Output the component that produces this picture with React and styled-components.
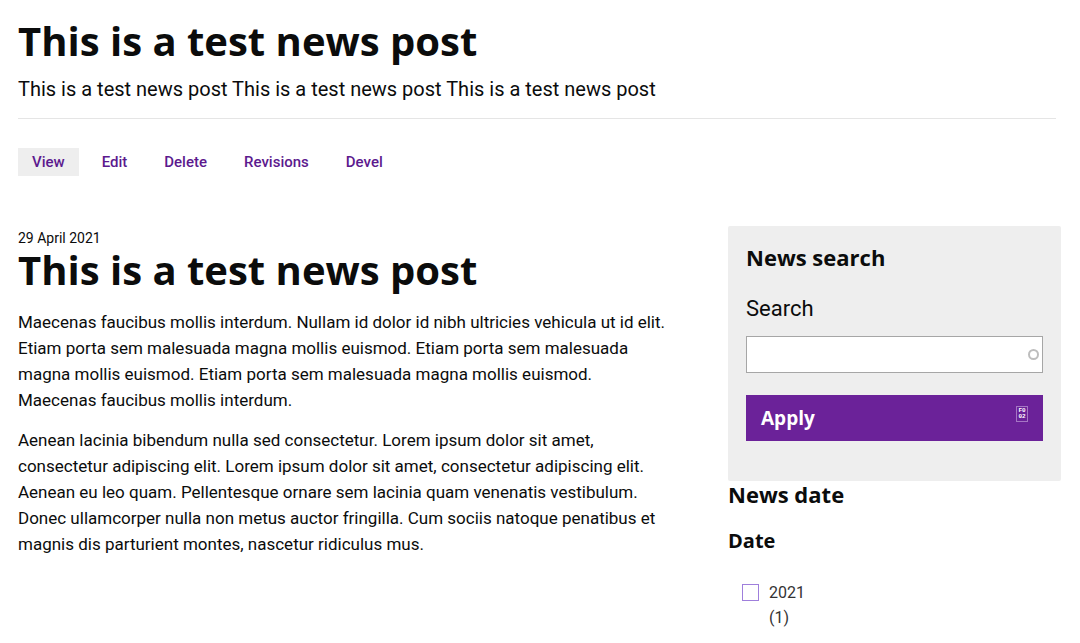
import React from "react";
import styled, { createGlobalStyle } from "styled-components";

const Global = createGlobalStyle`
  *, *::before, *::after { box-sizing: border-box; }
  body { margin: 0; background: #fff; color: #0b0c0c; font-family: Roboto, "Liberation Sans", sans-serif; }
`;
const display = `"Open Sans", "Noto Sans", sans-serif`;

const Page = styled.div`padding: 21px 19px 0 18px;`;
const Header = styled.header`
  margin-right: 5px;
  padding-bottom: 16px;
  border-bottom: 1px solid #e5e5e5;
`;
const Title = styled.h1`
  margin: 0 0 ${(p) => (p.$article ? 19 : 15)}px;
  font: 700 40px/40px ${display};
`;
const Summary = styled.p`
  margin: 0;
  font-size: 20px;
  line-height: 26px;
`;
const Tabs = styled.nav`
  display: flex;
  flex-wrap: wrap;
  gap: 9px;
  margin-top: 29px;
`;
const Tab = styled.a`
  padding: 0 14px;
  font-size: 15px;
  font-weight: 500;
  line-height: 28px;
  color: #5c1a8e;
  text-decoration: none;
  background: ${(p) => (p.$active ? "#eeeeee" : "transparent")};
`;
const Columns = styled.div`
  display: grid;
  grid-template-columns: minmax(0, 2fr) minmax(0, 1fr);
  gap: 44px;
  margin-top: 50px;
`;
const Article = styled.article`
  padding-right: 12px;
  font-size: 17px;
  line-height: 26px;
`;
const Posted = styled.time`
  display: block;
  font-size: 14px;
  line-height: 24px;
`;
const Paragraph = styled.p`margin: 0 0 14px;`;
const Side = styled.aside`
  min-width: 0;
`;
const SearchForm = styled.form`
  padding: 18px 18px 40px;
  border-radius: 2px;
  background: #eeeeee;
`;
const SideHeading = styled.h2`
  margin: 0;
  font: 700 22px/26px ${display};
`;
const GroupHeading = styled(SideHeading)`
  margin-top: 21px;
  font-size: 20px;
`;
const Label = styled.label`
  display: block;
  margin-top: 25px;
  font-size: 22px;
  line-height: 28px;
`;
const Field = styled.div`
  display: flex;
  align-items: center;
  margin-top: 13px;
  padding-right: 3px;
  border: 1px solid #a6a6a6;
  background: #fff;
`;
const Input = styled.input`
  flex: 1;
  min-width: 0;
  height: 35px;
  padding: 0 8px;
  border: 0;
  background: transparent;
  font: 18px Roboto, sans-serif;
`;
const Throbber = styled.span`
  width: 11px;
  height: 11px;
  border: 2px solid #bdbdbd;
  border-radius: 50%;
`;
const Apply = styled.button`
  display: flex;
  justify-content: space-between;
  align-items: center;
  width: 100%;
  height: 46px;
  margin-top: 22px;
  padding: 0 15px;
  border: 0;
  background: #6b2299;
  color: #fff;
  font: 700 19px/28px ${display};
`;
const CodeBox = styled.span`
  width: 12px;
  height: 16px;
  margin-bottom: 8px;
  padding-top: 1px;
  border: 1px solid #a576c4;
  font: 700 6px/6px "Liberation Mono", monospace;
  text-align: center;
`;
const Option = styled.label`
  display: flex;
  gap: 10px;
  margin: 26px 0 0 14px;
  color: #333;
  font-size: 16px;
  line-height: 25px;
`;
const Checkbox = styled.input`
  appearance: none;
  width: 17px;
  height: 17px;
  margin: 4px 0 0;
  border: 1px solid #9f7fdc;
  background: #fff;

  &:checked { background: #6b2299; }
`;

const tabs = ["View", "Edit", "Delete", "Revisions", "Devel"];

export default function App() {
  return (
    <>
      <Global />
      <Page>
        <Header>
          <Title>This is a test news post</Title>
          <Summary>This is a test news post This is a test news post This is a test news post</Summary>
        </Header>
        <Tabs>
          {tabs.map((t, i) => (
            <Tab href="#" key={t} $active={i === 0}>{t}</Tab>
          ))}
        </Tabs>
        <Columns>
          <Article>
            <Posted dateTime="2021-04-29">29 April 2021</Posted>
            <Title as="h2" $article>This is a test news post</Title>
            <Paragraph>
              Maecenas faucibus mollis interdum. Nullam id dolor id nibh ultricies vehicula ut id elit.
              Etiam porta sem malesuada magna mollis euismod. Etiam porta sem malesuada magna mollis
              euismod. Etiam porta sem malesuada magna mollis euismod. Maecenas faucibus mollis interdum.
            </Paragraph>
            <Paragraph>
              Aenean lacinia bibendum nulla sed consectetur. Lorem ipsum dolor sit amet, consectetur
              adipiscing elit. Lorem ipsum dolor sit amet, consectetur adipiscing elit. Aenean eu leo
              quam. Pellentesque ornare sem lacinia quam venenatis vestibulum. Donec ullamcorper nulla
              non metus auctor fringilla. Cum sociis natoque penatibus et magnis dis parturient montes,
              nascetur ridiculus mus.
            </Paragraph>
          </Article>
          <Side>
            <SearchForm>
              <SideHeading>News search</SideHeading>
              <Label htmlFor="search">Search</Label>
              <Field>
                <Input id="search" type="text" />
                <Throbber />
              </Field>
              <Apply type="button">
                Apply
                <CodeBox aria-hidden="true">F0<br />02</CodeBox>
              </Apply>
            </SearchForm>
            <SideHeading>News date</SideHeading>
            <GroupHeading as="h3">Date</GroupHeading>
            <Option>
              <Checkbox type="checkbox" />
              <span>2021<br />(1)</span>
            </Option>
          </Side>
        </Columns>
      </Page>
    </>
  );
}
